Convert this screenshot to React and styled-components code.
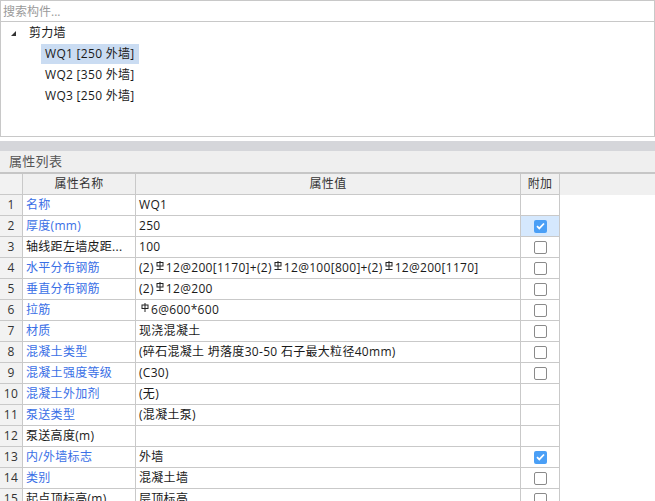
import React from "react";
import styled, { createGlobalStyle } from "styled-components";

const Global = createGlobalStyle`
  html, body { margin: 0; padding: 0; background: #fff; }
  body {
    font-family: "Open Sans", "Noto Sans CJK SC", sans-serif;
    font-size: 12px;
    letter-spacing: 0.3px;
    color: #1a1a1a;
  }
`;

const Page = styled.div`
  width: 655px;
  height: 501px;
  overflow: hidden;
  display: flex;
  flex-direction: column;
  & > * { flex-shrink: 0; }
`;

const TopPanel = styled.div`
  height: 137px;
  box-sizing: border-box;
  border: 1px solid #c8c8c8;
  display: flex;
  flex-direction: column;
`;

const Search = styled.input`
  height: 21px;
  flex: none;
  box-sizing: border-box;
  border: none;
  border-bottom: 1px solid #c8c8c8;
  padding: 0 2px;
  font: inherit;
  outline: none;
  &::placeholder { color: #9a9a9a; }
`;

const Tree = styled.div`
  flex: 1;
  display: flex;
  flex-direction: column;
`;

const TreeRow = styled.div`
  height: 21px;
  flex: none;
  display: flex;
  align-items: center;
  padding-left: ${(p) => p.$indent}px;
`;

const Caret = styled.span`
  width: 0;
  height: 0;
  border-left: 5px solid transparent;
  border-bottom: 5px solid #333;
  margin-right: 9px;
  margin-top: 1px;
`;

const TreeLabel = styled.span`
  height: 20px;
  line-height: 20px;
  padding: 0 4px;
  background: ${(p) => (p.$selected ? "#cadcf2" : "transparent")};
`;

const Spacer = styled.div`
  height: 4px;
`;

const Band = styled.div`
  height: 10px;
  background: #d5d6da;
`;

const Title = styled.div`
  height: 21px;
  line-height: 21px;
  padding-left: 9px;
  font-size: 13px;
  background: #efefef;
  color: #555;
  border-bottom: 2px solid #c6c6c6;
`;

const Row = styled.div`
  display: flex;
  height: 21px;
  background: ${(p) => (p.$head ? "#f0f0f0" : "#fff")};
`;

const Cell = styled.div`
  box-sizing: border-box;
  flex: none;
  width: ${(p) => p.$w}px;
  height: 21px;
  line-height: 20px;
  border-right: 1px solid #c9c9c9;
  border-bottom: 1px solid #c9c9c9;
  padding: 0 3px;
  white-space: nowrap;
  overflow: hidden;
  display: flex;
  align-items: center;
  justify-content: ${(p) => (p.$center ? "center" : "flex-start")};
  color: ${(p) => (p.$blue ? "#3a6fe6" : "#1a1a1a")};
  background: ${(p) => p.$bg || "transparent"};
`;

const NumCell = styled(Cell)`
  background: #f2f2f2;
  color: #333;
  padding: 0;
`;

const HeadCell = styled(Cell)`
  color: #333;
`;

const Box = styled.span`
  box-sizing: border-box;
  width: 13px;
  height: 13px;
  border-radius: 2px;
  border: ${(p) => (p.$on ? "none" : "1.5px solid #8a8a8a")};
  background: ${(p) => (p.$on ? "#4a9ff6" : "#fff")};
  display: flex;
  align-items: center;
  justify-content: center;
`;

const Bar = styled.svg`
  width: 8px;
  height: 9px;
  margin: 0 2px 5px 2px;
  flex: none;
`;

const Rebar3 = () => (
  <Bar viewBox="0 0 8 9">
    <rect x="1" y="1.5" width="6" height="3.5" fill="none" stroke="#222" strokeWidth="1" />
    <path d="M4 0v8M0.5 8.5h7" stroke="#222" strokeWidth="1" fill="none" />
  </Bar>
);

const Rebar1 = () => (
  <Bar viewBox="0 0 8 9">
    <rect x="1" y="2" width="6" height="3.5" fill="none" stroke="#222" strokeWidth="1" />
    <path d="M4 0v9" stroke="#222" strokeWidth="1" fill="none" />
  </Bar>
);

const Check = ({ on }) => (
  <Box $on={on}>
    {on && (
      <svg width="9" height="8" viewBox="0 0 9 8">
        <path d="M1 4.2l2.3 2.2L8 1.5" stroke="#fff" strokeWidth="1.8" fill="none" />
      </svg>
    )}
  </Box>
);

const R = Rebar3;

const rows = [
  { name: "名称", blue: true, value: "WQ1", check: null },
  { name: "厚度(mm)", blue: true, value: "250", check: true, hl: true },
  { name: "轴线距左墙皮距...", value: "100", check: false },
  {
    name: "水平分布钢筋",
    blue: true,
    value: (
      <>
        (2)<R />12@200[1170]+(2)<R />12@100[800]+(2)<R />12@200[1170]
      </>
    ),
    check: false,
  },
  { name: "垂直分布钢筋", blue: true, value: <>(2)<R />12@200</>, check: false },
  { name: "拉筋", blue: true, value: <><Rebar1 />6@600*600</>, check: false },
  { name: "材质", blue: true, value: "现浇混凝土", check: false },
  { name: "混凝土类型", blue: true, value: "(碎石混凝土 坍落度30-50 石子最大粒径40mm)", check: false },
  { name: "混凝土强度等级", blue: true, value: "(C30)", check: false },
  { name: "混凝土外加剂", blue: true, value: "(无)", check: null },
  { name: "泵送类型", blue: true, value: "(混凝土泵)", check: null },
  { name: "泵送高度(m)", value: "", check: null },
  { name: "内/外墙标志", blue: true, value: "外墙", check: true },
  { name: "类别", blue: true, value: "混凝土墙", check: false },
  { name: "起点顶标高(m)", value: "层顶标高", check: false },
];

export default function App() {
  return (
    <Page>
      <Global />
      <TopPanel>
        <Search placeholder="搜索构件..." />
        <Tree>
          <TreeRow $indent={10}>
            <Caret />
            <TreeLabel>剪力墙</TreeLabel>
          </TreeRow>
          <TreeRow $indent={40}>
            <TreeLabel $selected>WQ1 [250 外墙]</TreeLabel>
          </TreeRow>
          <TreeRow $indent={40}>
            <TreeLabel>WQ2 [350 外墙]</TreeLabel>
          </TreeRow>
          <TreeRow $indent={40}>
            <TreeLabel>WQ3 [250 外墙]</TreeLabel>
          </TreeRow>
        </Tree>
      </TopPanel>
      <Spacer />
      <Band />
      <Title>属性列表</Title>
      <Row $head>
        <NumCell $w={23} />
        <HeadCell $w={113} $center>属性名称</HeadCell>
        <HeadCell $w={385} $center>属性值</HeadCell>
        <HeadCell $w={39} $center>附加</HeadCell>
      </Row>
      {rows.map((r, i) => (
        <Row key={i}>
          <NumCell $w={23} $center>{i + 1}</NumCell>
          <Cell $w={113} $blue={r.blue}>{r.name}</Cell>
          <Cell $w={385}>{r.value}</Cell>
          <Cell $w={39} $center $bg={r.hl ? "#d5e8fd" : undefined}>
            {r.check !== null && <Check on={r.check} />}
          </Cell>
        </Row>
      ))}
    </Page>
  );
}
